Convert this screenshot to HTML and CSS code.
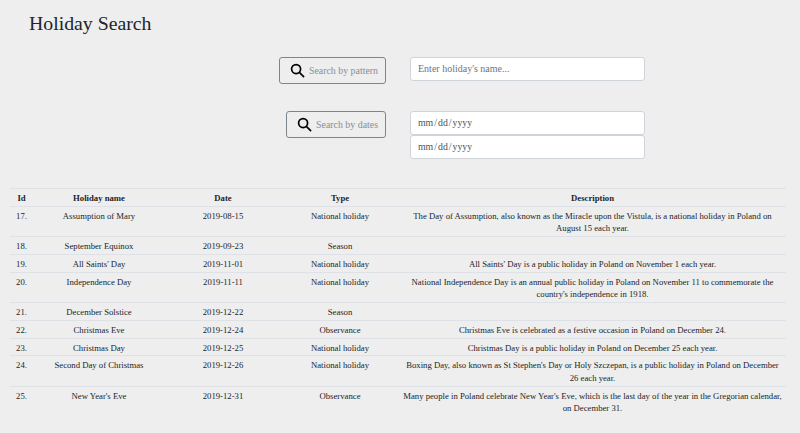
FILE: index.html
```html
<!DOCTYPE html>
<html lang="en">
<head>
  <meta charset="UTF-8" />
  <title>Holiday Search</title>
  <link rel="stylesheet" href="styles.css">
</head>
<body>
  <h1 class="title">Holiday Search</h1>

  <div class="search-row">
    <div class="search-action">
      <button class="search-btn">
        <svg class="search-icon" viewBox="0 0 16 16"><circle cx="6.5" cy="6.5" r="4.8"/><path d="M10 10l5 5"/></svg>
        Search by pattern
      </button>
    </div>
    <div class="search-fields">
      <input class="field" type="text" placeholder="Enter holiday's name...">
    </div>
  </div>

  <div class="search-row">
    <div class="search-action">
      <button class="search-btn">
        <svg class="search-icon" viewBox="0 0 16 16"><circle cx="6.5" cy="6.5" r="4.8"/><path d="M10 10l5 5"/></svg>
        Search by dates
      </button>
    </div>
    <div class="search-fields">
      <input class="field" type="date">
      <input class="field" type="date">
    </div>
  </div>

  <table class="holidays">
    <colgroup>
      <col class="col-id"><col class="col-name"><col class="col-date"><col class="col-type"><col>
    </colgroup>
    <thead>
      <tr><th>Id</th><th>Holiday name</th><th>Date</th><th>Type</th><th>Description</th></tr>
    </thead>
    <tbody>
      <tr><td>17.</td><td>Assumption of Mary</td><td>2019-08-15</td><td>National holiday</td><td>The Day of Assumption, also known as the Miracle upon the Vistula, is a national holiday in Poland on August 15 each year.</td></tr>
      <tr><td>18.</td><td>September Equinox</td><td>2019-09-23</td><td>Season</td><td></td></tr>
      <tr><td>19.</td><td>All Saints' Day</td><td>2019-11-01</td><td>National holiday</td><td>All Saints' Day is a public holiday in Poland on November 1 each year.</td></tr>
      <tr><td>20.</td><td>Independence Day</td><td>2019-11-11</td><td>National holiday</td><td>National Independence Day is an annual public holiday in Poland on November 11 to commemorate the country's independence in 1918.</td></tr>
      <tr><td>21.</td><td>December Solstice</td><td>2019-12-22</td><td>Season</td><td></td></tr>
      <tr><td>22.</td><td>Christmas Eve</td><td>2019-12-24</td><td>Observance</td><td>Christmas Eve is celebrated as a festive occasion in Poland on December 24.</td></tr>
      <tr><td>23.</td><td>Christmas Day</td><td>2019-12-25</td><td>National holiday</td><td>Christmas Day is a public holiday in Poland on December 25 each year.</td></tr>
      <tr><td>24.</td><td>Second Day of Christmas</td><td>2019-12-26</td><td>National holiday</td><td>Boxing Day, also known as St Stephen's Day or Holy Szczepan, is a public holiday in Poland on December 26 each year.</td></tr>
      <tr><td>25.</td><td>New Year's Eve</td><td>2019-12-31</td><td>Observance</td><td>Many people in Poland celebrate New Year's Eve, which is the last day of the year in the Gregorian calendar, on December 31.</td></tr>
    </tbody>
  </table>
</body>
</html>
```

FILE: styles.css
```css
body {
  margin: 0;
  background-color: #eeeeee;
  font-family: "Liberation Serif", serif;
  color: #212529;
  overflow: hidden;
}
.title {
  margin: 0;
  padding: 11px 0 0 29px;
  height: 46px;
  font-size: 19.8px;
  line-height: 24px;
  font-weight: 400;
}
.search-row {
  display: flex;
  gap: 24px;
  margin-bottom: 27px;
}
.search-action {
  width: 386px;
  display: flex;
  justify-content: flex-end;
  align-items: flex-start;
}
.search-fields {
  width: 235px;
  display: flex;
  flex-direction: column;
}
.search-btn {
  display: flex;
  align-items: center;
  gap: 4px;
  height: 27px;
  padding: 0 7px 0 10px;
  background: transparent;
  border: 1px solid #7d858c;
  border-radius: 3px;
  color: #868e96;
  font-family: inherit;
  font-size: 9.9px;
  white-space: nowrap;
}
.search-icon {
  flex: none;
  width: 15px;
  height: 15px;
  fill: none;
  stroke: #000;
  stroke-width: 1.8;
}
.field {
  box-sizing: border-box;
  width: 100%;
  height: 24px;
  padding: 0 7px 2px;
  background: #fff;
  border: 1px solid #ced4da;
  border-radius: 3px;
  color: #495057;
  font-family: inherit;
  font-size: 10px;
}
.field::placeholder {
  color: #6c757d;
}
.field::-webkit-calendar-picker-indicator {
  display: none;
}
.field[type="date"] {
  padding-left: 6px;
  font-size: 9.8px;
}
.holidays {
  width: 776px;
  margin: 29px 0 0 10px;
  border-collapse: collapse;
  table-layout: fixed;
  font-size: 8.7px;
  line-height: 12.6px;
}
.col-id { width: 23px; }
.col-name { width: 132px; }
.col-date { width: 116px; }
.col-type { width: 118px; }
.holidays th,
.holidays td {
  padding: 3px 3px 1.2px;
  text-align: center;
  vertical-align: top;
  border-top: 1px solid #dee2e6;
}
.holidays thead th {
  border-bottom: 1px solid #dee2e6;
}
```
